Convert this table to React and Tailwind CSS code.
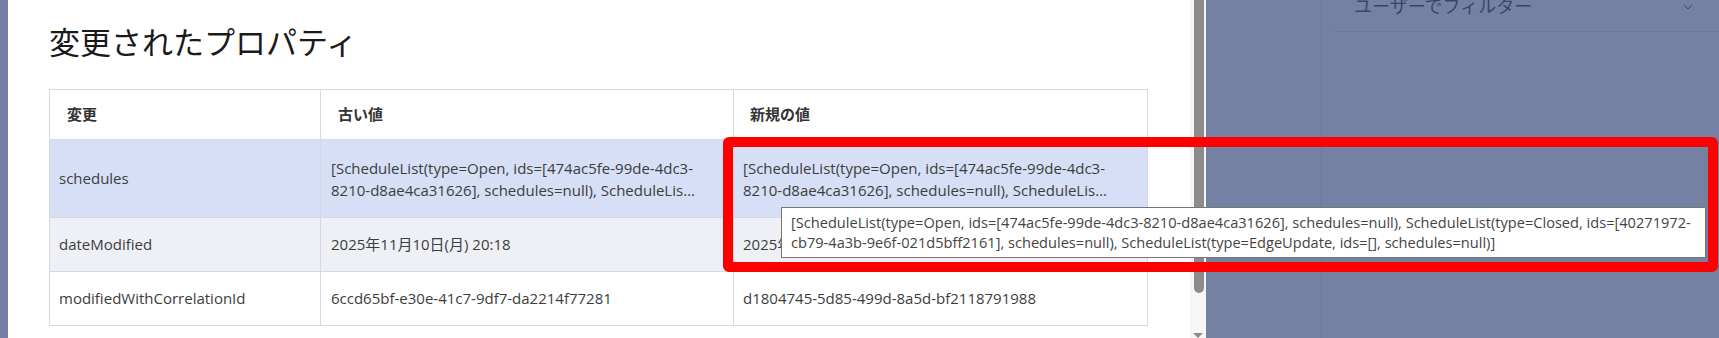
import React from 'react';
import { ChevronDown } from 'lucide-react';

const FONT = "font-['Open_Sans','Noto_Sans_CJK_JP',sans-serif]";

const scheduleHead = '[ScheduleList(type=Open, ids=[474ac5fe-99de-4dc3-';
const scheduleTail =
  '8210-d8ae4ca31626], schedules=null), ScheduleList(type=Closed, ids=[40271972-cb79-4a3b-9e6f-021d5bff2161], schedules=null), ScheduleList(type=EdgeUpdate, ids=[], schedules=null)]';

// two-line preview, second line cut with an ellipsis
const Clamp = ({ head, tail }) => (
  <div className="w-[368px] leading-[22px]">
    <div className="whitespace-nowrap">{head}</div>
    <div className="truncate">{tail}</div>
  </div>
);

const rows = [
  {
    key: 'schedules',
    oldValue: <Clamp head={scheduleHead} tail={scheduleTail} />,
    newValue: <Clamp head={scheduleHead} tail={scheduleTail} />,
    rowClass: 'bg-[#d6dff6] h-[78px]',
  },
  {
    key: 'dateModified',
    oldValue: '2025年11月10日(月) 20:18',
    newValue: '2025年11月10日(月) 20:18',
    rowClass: 'bg-[#eef0f6] h-[54px]',
  },
  {
    key: 'modifiedWithCorrelationId',
    oldValue: '6ccd65bf-e30e-41c7-9df7-da2214f77281',
    newValue: 'd1804745-5d85-499d-8a5d-bf2118791988',
    rowClass: 'bg-white h-[54px]',
  },
];

// Right-hand filter panel, dimmed by the modal backdrop
const FilterPanel = () => (
  <div className="w-[513px] h-full bg-[#7481a3] flex shrink-0">
    <div className="w-[116px] h-full border-r border-[#6b779a]" />
    <div className="flex-1 pl-[12px]">
      <div className="-mt-[20px] h-[52px] border-b border-[#6c789b] flex items-center justify-between pl-[20px] pr-[23px]">
        <span className="text-[18px] text-[#3b4566] font-['Noto_Sans_CJK_JP',sans-serif] whitespace-nowrap">
          ユーザーでフィルター
        </span>
        <ChevronDown className="w-[16px] h-[16px] text-[#3b4566] mt-[2px]" strokeWidth={1.5} />
      </div>
    </div>
  </div>
);

const Scrollbar = () => (
  <div className="w-[16px] h-full bg-[#f6f6f6] flex flex-col items-center shrink-0">
    <div className="w-[10px] h-[293px] bg-[#8c8c8c] rounded-b-full ml-[1px]" />
    <div className="flex-1" />
    <div className="w-0 h-0 border-l-[5px] border-r-[5px] border-t-[5px] border-l-transparent border-r-transparent border-t-[#8c8c8c]" />
  </div>
);

export default function App() {
  return (
    <div className={`relative w-[1719px] h-[338px] overflow-hidden flex ${FONT}`}>
      <div className="w-[8px] h-full bg-[#7480a3] shrink-0" />

      <div className="flex-1 h-full bg-white pl-[41px] pt-[21px]">
        <h2 className="text-[31px] leading-[40px] text-[#1a1a1a] font-normal font-['Noto_Sans_CJK_JP',sans-serif]">
          変更されたプロパティ
        </h2>

        <table className="mt-[28px] w-[1098px] table-fixed border-collapse text-[15px] text-[#3d3d3d]">
          <colgroup>
            <col className="w-[271px]" />
            <col className="w-[413px]" />
            <col className="w-[414px]" />
          </colgroup>
          <thead>
            <tr className="h-[50px] bg-white">
              <th className="border border-[#d3d9e7] text-left font-bold pl-[17px] text-[#333] font-['Noto_Sans_CJK_JP',sans-serif]">変更</th>
              <th className="border border-[#d3d9e7] text-left font-bold pl-[17px] text-[#333] font-['Noto_Sans_CJK_JP',sans-serif]">古い値</th>
              <th className="border border-[#d3d9e7] text-left font-bold pl-[16px] text-[#333] font-['Noto_Sans_CJK_JP',sans-serif]">新規の値</th>
            </tr>
          </thead>
          <tbody>
            {rows.map((row) => (
              <tr key={row.key} className={row.rowClass}>
                <td className="border border-[#d3d9e7] px-[9px] align-middle">{row.key}</td>
                <td className="border border-[#d3d9e7] pl-[10px] pr-[8px] align-middle">{row.oldValue}</td>
                <td className="border border-[#d3d9e7] pl-[9px] pr-[8px] align-middle">{row.newValue}</td>
              </tr>
            ))}
          </tbody>
        </table>
      </div>

      <Scrollbar />
      <FilterPanel />

      {/* highlight annotation */}
      <div className="absolute left-[723px] top-[137px] w-[995px] h-[135px] border-[10px] border-[#ff0000] rounded-[6px]" />

      {/* hover tooltip */}
      <div className="absolute left-[781px] top-[207px] w-[925px] h-[51px] bg-white border border-[#767676] pl-[9px] pt-[4px] text-[14.6px] leading-[20px] text-[#444] whitespace-nowrap overflow-hidden">
        <div>[ScheduleList(type=Open, ids=[474ac5fe-99de-4dc3-8210-d8ae4ca31626], schedules=null), ScheduleList(type=Closed, ids=[40271972-</div>
        <div>cb79-4a3b-9e6f-021d5bff2161], schedules=null), ScheduleList(type=EdgeUpdate, ids=[], schedules=null)]</div>
      </div>
    </div>
  );
}
